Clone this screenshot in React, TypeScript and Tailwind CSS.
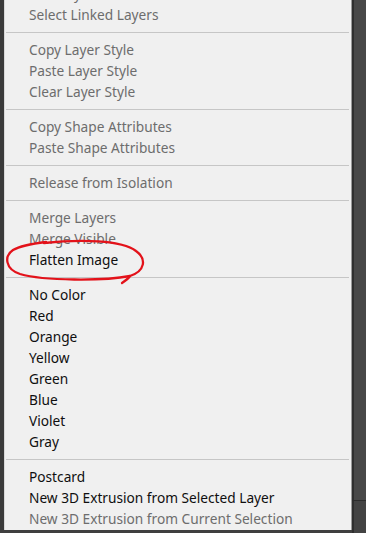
import React from "react";

type Item = { label: string; enabled?: boolean } | "sep";

const items: Item[] = [
  { label: "Link Layers" },
  { label: "Select Linked Layers" },
  "sep",
  { label: "Copy Layer Style" },
  { label: "Paste Layer Style" },
  { label: "Clear Layer Style" },
  "sep",
  { label: "Copy Shape Attributes" },
  { label: "Paste Shape Attributes" },
  "sep",
  { label: "Release from Isolation" },
  "sep",
  { label: "Merge Layers" },
  { label: "Merge Visible" },
  { label: "Flatten Image", enabled: true },
  "sep",
  { label: "No Color", enabled: true },
  { label: "Red", enabled: true },
  { label: "Orange", enabled: true },
  { label: "Yellow", enabled: true },
  { label: "Green", enabled: true },
  { label: "Blue", enabled: true },
  { label: "Violet", enabled: true },
  { label: "Gray", enabled: true },
  "sep",
  { label: "Postcard", enabled: true },
  { label: "New 3D Extrusion from Selected Layer", enabled: true },
  { label: "New 3D Extrusion from Current Selection" },
];

export default function App() {
  return (
    <div
      className="relative w-[366px] h-[533px] overflow-hidden bg-[#464646] flex"
      style={{ fontFamily: '"Noto Sans", "Open Sans", sans-serif' }}
    >
      <div className="w-[4px] h-[530px] bg-[#3a3a3a] shrink-0" />
      <div className="w-[348px] h-[530px] bg-[#f0f0f0] shrink-0 overflow-hidden border-r border-[#9a9a9a] border-l border-l-[#d8d8d8]">
        <div className="mt-[-16.5px] flex flex-col">
          {items.map((it, i) =>
            it === "sep" ? (
              <div key={i} className="h-[14px] flex items-center pl-[1px] pr-[2px]">
                <div className="h-px w-full bg-[#c6c6c6]" />
              </div>
            ) : (
              <div
                key={i}
                className={
                  "h-[21px] flex items-center pl-[24px] text-[13.7px] leading-none whitespace-nowrap " +
                  (it.enabled ? "text-[#0f0f0f]" : "text-[#6d6d6d]")
                }
              >
                {it.label}
              </div>
            )
          )}
        </div>
      </div>
      <div className="flex-1 flex flex-col h-full">
        <div className="h-[500px] border-l-2 border-[#2f2f2f] bg-[#484848]" />
        <div className="h-px bg-[#2c2c2c]" />
        <div className="flex-1 border-l-2 border-[#2f2f2f] bg-[#434343]" />
      </div>
      <div className="absolute left-0 bottom-0 w-[352px] h-[3px] bg-[#3f3f3f]" />
      <svg
        className="absolute left-0 top-0 pointer-events-none"
        width="366"
        height="533"
        viewBox="0 0 366 533"
      >
        <path
          d="M 44 243 C 80 239, 122 240, 136 251 C 147 259, 145 271, 130 276 C 104 281, 44 281, 20 274 C 5 269, 4 256, 13 250 C 20 246, 30 244, 46 242"
          fill="none"
          stroke="#e3121a"
          strokeWidth="2.3"
          strokeLinecap="round"
        />
        <path
          d="M 130 276 C 128 279, 125 281, 122 283"
          fill="none"
          stroke="#e3121a"
          strokeWidth="2.3"
          strokeLinecap="round"
        />
      </svg>
    </div>
  );
}
